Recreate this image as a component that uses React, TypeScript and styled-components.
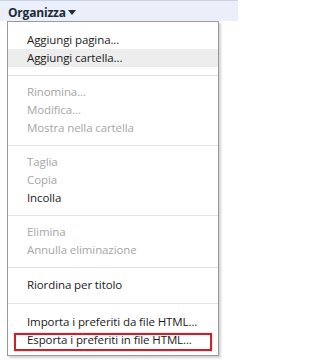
import React from "react";
import styled, { createGlobalStyle, css } from "styled-components";

const GlobalStyle = createGlobalStyle`
  html, body { margin: 0; padding: 0; background: #ffffff; }
  body { font-family: "Open Sans", "Noto Sans", Arial, sans-serif; }
`;

const Page = styled.div`
  width: 238px;
  height: 363px;
  background: #ffffff;
  overflow: hidden;
`;

const Toolbar = styled.div`
  height: 20px;
  border-top: 1px solid #c9d5e6;
  background: #eaeff9;
  display: flex;
  align-items: center;
  padding-left: 8px;
`;

const ToolButton = styled.div`
  display: flex;
  align-items: center;
  gap: 2px;
  font-family: "Open Sans", "Noto Sans", sans-serif;
  font-weight: 700;
  font-size: 12px;
  color: #1e2b3c;
  margin-top: 2px;
  letter-spacing: -0.2px;
`;

const Caret = styled.svg`
  width: 8px;
  height: 5px;
  margin-top: 1px;
`;

const Menu = styled.div`
  margin-left: 7px;
  width: 212px;
  box-sizing: border-box;
  border: 1px solid #9a9a9a;
  background: #ffffff;
  padding: 9px 0 6px;
  box-shadow: 2px 2px 2px rgba(0, 0, 0, 0.18);
  display: flex;
  flex-direction: column;
`;

const Item = styled.div<{ $disabled?: boolean; $hover?: boolean; $marked?: boolean }>`
  position: relative;
  height: 18px;
  line-height: 18px;
  padding-left: 19px;
  font-family: "Open Sans", "Noto Sans", sans-serif;
  font-size: 11.5px;
  letter-spacing: -0.1px;
  white-space: nowrap;
  color: ${(p) => (p.$disabled ? "#a6a6a6" : "#1a1a1a")};
  background: ${(p) => (p.$hover ? "#ededed" : "transparent")};
  ${(p) =>
    p.$marked &&
    css`
      &::after {
        content: "";
        position: absolute;
        left: 6px;
        right: 6px;
        top: 2px;
        bottom: -2px;
        border: 2px solid #cf2027;
        box-shadow: 0 0 1px rgba(160, 0, 0, 0.5);
        pointer-events: none;
      }
    `}
`;

const Separator = styled.div<{ $h?: number }>`
  height: ${(p) => p.$h ?? 16}px;
  display: flex;
  align-items: center;
  &::before {
    content: "";
    flex: 1;
    height: 1px;
    background: #e4e4e4;
  }
`;

type Entry =
  | { kind: "item"; label: string; disabled?: boolean; hover?: boolean; marked?: boolean }
  | { kind: "sep"; h?: number };

const entries: Entry[] = [
  { kind: "item", label: "Aggiungi pagina..." },
  { kind: "item", label: "Aggiungi cartella...", hover: true },
  { kind: "sep" },
  { kind: "item", label: "Rinomina...", disabled: true },
  { kind: "item", label: "Modifica...", disabled: true },
  { kind: "item", label: "Mostra nella cartella", disabled: true },
  { kind: "sep" },
  { kind: "item", label: "Taglia", disabled: true },
  { kind: "item", label: "Copia", disabled: true },
  { kind: "item", label: "Incolla" },
  { kind: "sep" },
  { kind: "item", label: "Elimina", disabled: true },
  { kind: "item", label: "Annulla eliminazione", disabled: true },
  { kind: "sep", h: 17 },
  { kind: "item", label: "Riordina per titolo" },
  { kind: "sep", h: 19 },
  { kind: "item", label: "Importa i preferiti da file HTML..." },
  { kind: "item", label: "Esporta i preferiti in file HTML...", marked: true },
];

export default function App() {
  return (
    <Page>
      <GlobalStyle />
      <Toolbar>
        <ToolButton>
          Organizza
          <Caret viewBox="0 0 8 5">
            <path d="M0 0 H8 L4 5 Z" fill="#1e2b3c" />
          </Caret>
        </ToolButton>
      </Toolbar>
      <Menu>
        {entries.map((e, i) =>
          e.kind === "sep" ? (
            <Separator key={i} $h={e.h} />
          ) : (
            <Item key={i} $disabled={e.disabled} $hover={e.hover} $marked={e.marked}>
              {e.label}
            </Item>
          )
        )}
      </Menu>
    </Page>
  );
}
